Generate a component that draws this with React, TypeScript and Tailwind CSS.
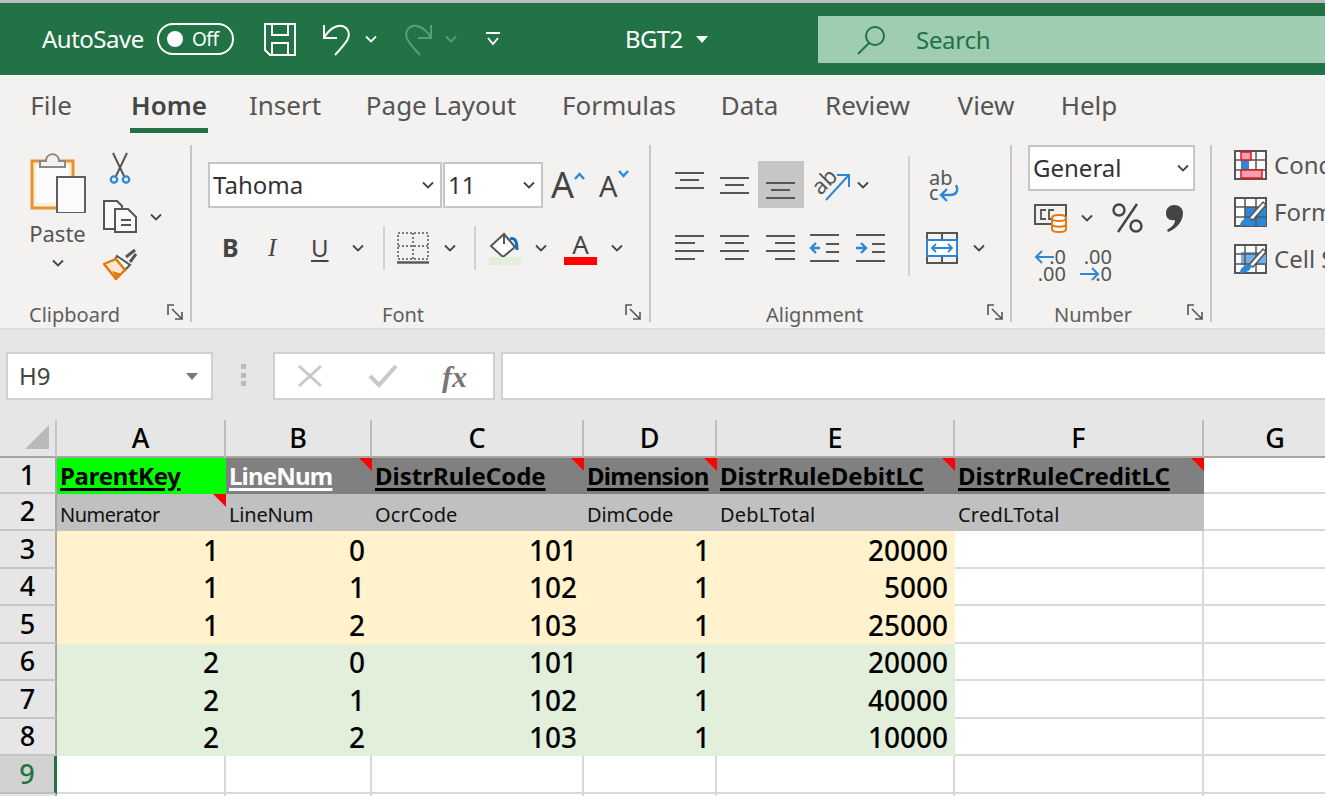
import React from "react";

const UI = "font-['Noto_Sans',sans-serif]";
const GREY = "#444444";

function Chev({ className = "", color = GREY }: { className?: string; color?: string }) {
  return (
    <svg width="12" height="8" viewBox="0 0 12 8" className={"shrink-0 " + className} fill="none">
      <path d="M1 1.5 6 6.5 11 1.5" stroke={color} strokeWidth="1.8" />
    </svg>
  );
}

function Launcher({ className = "" }: { className?: string }) {
  return (
    <svg width="17" height="17" viewBox="0 0 17 17" className={"shrink-0 " + className} fill="none" stroke="#555" strokeWidth="1.6">
      <path d="M7 1H1v10" />
      <path d="M5 5 15 15M15 8v7H8" />
    </svg>
  );
}

function Lines({ rows }: { rows: [number, number, number][] }) {
  return (
    <svg width="30" height="30" viewBox="0 0 30 30" fill="none" stroke="#555" strokeWidth="2" className="shrink-0">
      {rows.map(([a, b, y], i) => (
        <line key={i} x1={a} x2={b} y1={y} y2={y} />
      ))}
    </svg>
  );
}

function AlignBtn({ rows, active = false }: { rows: [number, number, number][]; active?: boolean }) {
  return (
    <div className={"w-[45.5px] h-[47px] flex items-center justify-center " + (active ? "bg-[#c8c6c4]" : "")}>
      <Lines rows={rows} />
    </div>
  );
}

function Save() {
  return (
    <svg width="32" height="33" viewBox="0 0 32 33" fill="none" stroke="#fff" strokeWidth="2">
      <path d="M1 1h30v31H6l-5-5z" />
      <path d="M8 1v11h16V1M8 32V20h16v12" />
    </svg>
  );
}

function Undo({ flip = false, color = "#fff" }: { flip?: boolean; color?: string }) {
  return (
    <svg width="30" height="34" viewBox="0 0 30 34" fill="none" stroke={color} strokeWidth="2" className={flip ? "-scale-x-100" : ""}>
      <path d="M2 3v13h13" />
      <path d="M2 16C8 5 19 0 25 7c5 7 0 13-12 26" />
    </svg>
  );
}

function PasteIcon() {
  return (
    <svg width="56" height="61" viewBox="0 0 56 61">
      <rect x="2" y="9" width="41" height="47" fill="#fdf0d8" stroke="#e8912d" strokeWidth="3" />
      <rect x="6" y="13" width="33" height="38" fill="#fbfbfb" />
      <path d="M10 15V9h6c0-9 13-9 13 0h6v6z" fill="#f3f2f1" stroke="#8a8886" strokeWidth="2" />
      <rect x="27" y="25" width="28" height="36" fill="#fbfbfb" stroke="#5f5f5f" strokeWidth="2" />
    </svg>
  );
}

function CutIcon() {
  return (
    <svg width="22" height="32" viewBox="0 0 22 32" fill="none">
      <path d="M4 1 15 24M18 1 7 24" stroke="#555" strokeWidth="2" />
      <circle cx="5" cy="27.5" r="3.2" stroke="#2b88d8" strokeWidth="2.2" />
      <circle cx="17" cy="27.5" r="3.2" stroke="#2b88d8" strokeWidth="2.2" />
    </svg>
  );
}

function CopyIcon() {
  return (
    <svg width="34" height="33" viewBox="0 0 34 33" fill="#f9f9f9" stroke="#555" strokeWidth="2">
      <path d="M12 29H1V1h13l5 5v4" />
      <path d="M12 9h13l8 8v15H12z" />
      <path d="M18 20h10M18 25h10" fill="none" />
    </svg>
  );
}

function BrushIcon() {
  return (
    <svg width="34" height="32" viewBox="0 0 34 32" fill="none">
      <path d="M23 9 32 2M27 14 33 6" stroke="#555" strokeWidth="3" />
      <path d="M14 8 27 17 22 22 12 12z" fill="#fff" stroke="#555" strokeWidth="2" />
      <path d="M1 16 13 11 22 22 13 31z" fill="#fbe7cf" stroke="#e07a10" strokeWidth="2.4" />
      <path d="M9 23 14 31 19 26z" fill="#e07a10" />
    </svg>
  );
}

function BordersIcon() {
  return (
    <svg width="32" height="32" viewBox="0 0 32 32" fill="none" stroke="#555">
      <path d="M1 1h30v26H1zM16 1v26M1 14h30" strokeWidth="1.5" strokeDasharray="2 2" />
      <path d="M0 30.500h32" strokeWidth="2.4" />
    </svg>
  );
}

function FillIcon() {
  return (
    <svg width="32" height="33" viewBox="0 0 32 33" fill="none">
      <path d="M2 14 15 2l11 13-12 10z" fill="#fff" stroke="#555" strokeWidth="2" />
      <path d="M15 2v10" stroke="#555" strokeWidth="2" />
      <path d="M21 7c5-2 7 2 7 11" stroke="#106ebe" strokeWidth="3" />
      <rect x="0" y="25" width="32" height="8" fill="#e2efda" />
    </svg>
  );
}

function Orientation() {
  return (
    <svg width="36" height="33" viewBox="0 0 36 33" fill="none" className="overflow-visible">
      <text x="-1" y="22" transform="rotate(-45 10 16)" fontFamily="Noto Sans, sans-serif" fontSize="22" fill="#555">ab</text>
      <path d="M12 32 34 8M23 7h12v12" stroke="#2b88d8" strokeWidth="2" />
    </svg>
  );
}

function Wrap() {
  return (
    <svg width="30" height="32" viewBox="0 0 30 32" fill="none" className="overflow-visible">
      <text x="0" y="15" fontFamily="Noto Sans, sans-serif" fontSize="20" fill="#555">ab</text>
      <text x="0" y="30" fontFamily="Noto Sans, sans-serif" fontSize="20" fill="#555">c</text>
      <path d="M27 15c3 6 0 10-6 10H13M18 19l-6 6 6 6" stroke="#2b88d8" strokeWidth="2.4" />
    </svg>
  );
}

function Merge() {
  return (
    <svg width="32" height="32" viewBox="0 0 32 32" fill="none">
      <rect x="1" y="1" width="30" height="30" stroke="#555" strokeWidth="2" />
      <path d="M16 1v8M16 23v8" stroke="#555" strokeWidth="2" />
      <rect x="1" y="8" width="30" height="16" fill="#fff" stroke="#2b88d8" strokeWidth="2" />
      <path d="M6 16h20M10 12l-4 4 4 4M22 12l4 4-4 4" stroke="#2b88d8" strokeWidth="1.800" />
    </svg>
  );
}

function Indent({ out }: { out?: boolean }) {
  return (
    <svg width="30" height="30" viewBox="0 0 30 30" fill="none">
      <path d="M1 2h29M17 11h13M17 19h13M1 28h29" stroke="#555" strokeWidth="2" />
      {out ? (
        <path d="M11 15H2M7 10l-5 5 5 5" stroke="#2b88d8" strokeWidth="2.4" />
      ) : (
        <path d="M1 15h10M6 10l5 5-5 5" stroke="#2b88d8" strokeWidth="2.4" />
      )}
    </svg>
  );
}

function Currency() {
  return (
    <svg width="34" height="30" viewBox="0 0 34 30" fill="none">
      <rect x="1" y="2" width="31" height="19" fill="#f3f2f1" stroke="#555" strokeWidth="2" />
      <path d="M12 7H7v9h5M20 7h-5v9h5" stroke="#555" strokeWidth="1.800" />
      <path d="M18 15v11c0 4 14 4 14 0V15c0-4-14-4-14 0zM18 15c0 4 14 4 14 0M18 21c0 3.500 14 3.500 14 0" fill="#fff" stroke="#e07a10" strokeWidth="2" />
    </svg>
  );
}

function Percent() {
  return (
    <svg width="31" height="30" viewBox="0 0 31 30" fill="none" stroke="#444" strokeWidth="2.4">
      <circle cx="7" cy="7" r="5.500" />
      <circle cx="24" cy="23" r="5.500" />
      <path d="M25 1 6 29" />
    </svg>
  );
}

function Comma() {
  return (
    <svg width="18" height="27" viewBox="0 0 18 27">
      <path d="M9 0c5 0 9 3 9 8 0 9-7 16-15 19l-1-2c5-3 8-6 8-10-6 1-9-2-9-7 0-5 4-8 8-8z" fill="#444" />
    </svg>
  );
}

function TableIcon({ kind }: { kind: "cond" | "table" | "cell" }) {
  return (
    <svg width="33" height="30" viewBox="0 0 33 30" fill="none" className="shrink-0">
      <rect x="1" y="1" width="31" height="28" fill="#fff" stroke="#555" strokeWidth="2" />
      {kind === "table" && <rect x="11" y="10" width="21" height="19" fill="#2b88d8" />}
      {kind === "cell" && <rect x="7" y="8" width="25" height="13" fill="#71afe5" />}
      <path d="M1 10h31M1 20h31M11 1v28M22 1v28" stroke="#555" strokeWidth="1.500" />
      {kind === "cond" && (
        <>
          <rect x="7" y="2" width="10" height="8" fill="#f4a0ac" stroke="#e81123" strokeWidth="1.500" />
          <rect x="7" y="11" width="8" height="8" fill="#2b88d8" />
          <rect x="7" y="20" width="21" height="8" fill="#f4a0ac" stroke="#e81123" strokeWidth="1.500" />
        </>
      )}
      {kind !== "cond" && (
        <>
          <path d="M15 21 29 5l3 3-13 15z" fill="#fff" stroke="#555" strokeWidth="1.500" />
          <path d="M6 29c0-6 6-9 11-8 1 5-4 8-11 8z" fill="#2b88d8" />
        </>
      )}
    </svg>
  );
}

function DecIcon({ more }: { more?: boolean }) {
  return (
    <div className="w-[32px] h-[34px] flex flex-col text-[20px] leading-[17px] text-[#555] relative items-end">
      <span>{more ? ".00" : ".0"}</span>
      <span>{more ? ".0" : ".00"}</span>
      <svg width="20" height="14" viewBox="0 0 20 14" fill="none" className={"absolute " + (more ? "left-0 top-[19px]" : "left-0 top-[2px]")}>
        {more ? (
          <path d="M0 7h18M12 1l6 6-6 6" stroke="#2b88d8" strokeWidth="2" />
        ) : (
          <path d="M20 7H2M8 1 2 7l6 6" stroke="#2b88d8" strokeWidth="2" />
        )}
      </svg>
    </div>
  );
}

function Sep() {
  return <div className="w-[2px] h-[177px] mt-[12px] bg-[#c8c6c4] shrink-0" />;
}

function Foot({ label, labelLeft, launcher }: { label: string; labelLeft: string; launcher?: string }) {
  return (
    <div className="h-[32px] pt-[6px] flex items-center relative text-[20px] text-[#605e5c]">
      <span className={labelLeft}>{label}</span>
      {launcher && <Launcher className={"absolute top-[8px] " + launcher} />}
    </div>
  );
}

function Combo({ text, w, caret = "ml-auto mr-[6px]" }: { text: string; w: string; caret?: string }) {
  return (
    <div className={"h-[46px] border-2 border-[#c8c6c4] bg-white flex items-center pl-[3px] text-[24px] text-[#333] shrink-0 " + w}>
      <span>{text}</span>
      <Chev className={caret} />
    </div>
  );
}

const COLS = [
  { label: "A", n: "ParentKey", tk: "tracking-[-0.3px]", s: "Numerator", stk: "tracking-[-0.5px]", a: ["1", "1", "1", "2", "2", "2"] },
  { label: "B", n: "LineNum", tk: "tracking-[-0.8px]", s: "LineNum", stk: "tracking-[-0.2px]", a: ["0", "1", "2", "0", "1", "2"] },
  { label: "C", n: "DistrRuleCode", tk: "tracking-[0px]", s: "OcrCode", stk: "tracking-[0.1px]", a: ["101", "102", "103", "101", "102", "103"] },
  { label: "D", n: "Dimension", tk: "tracking-[-0.7px]", s: "DimCode", stk: "tracking-[-0.1px]", a: ["1", "1", "1", "1", "1", "1"] },
  { label: "E", n: "DistrRuleDebitLC", tk: "tracking-[0px]", s: "DebLTotal", stk: "tracking-[0.2px]", a: ["20000", "5000", "25000", "20000", "40000", "10000"] },
  { label: "F", n: "DistrRuleCreditLC", tk: "tracking-[0px]", s: "CredLTotal", stk: "tracking-[0.2px]", a: [] as string[] },
];

function Flag() {
  return (
    <svg width="13" height="13" viewBox="0 0 13 13" className="absolute right-0 top-0">
      <path d="M0 0h13v13z" fill="#ff0000" />
    </svg>
  );
}

const WHITE = "bg-white border-r-2 border-b-2 border-[#d9d9d9]";

function RowHead({ n, sel }: { n: number; sel?: boolean }) {
  return (
    <div
      className={
        "flex items-center justify-center text-[27px] font-medium border-b-2 " +
        (sel
          ? "bg-[#d2d2d2] text-[#217346] border-r-[3px] border-r-[#217346] border-b-[#bdbdbd]"
          : "bg-[#e6e6e6] text-black border-r-2 border-r-[#a6a6a6] border-b-[#c4c4c4]")
      }
    >
      {n}
    </div>
  );
}

function Sheet() {
  return (
    <div className="grid grid-cols-[57px_169px_146px_212px_133px_238px_249px_144px] grid-rows-[38px_36px_37px_38px_37px_38px_37px_38px_37px_38px_10px] bg-white">
      <div className="bg-[#e6e6e6] border-r-2 border-r-[#c4c4c4] border-b-2 border-b-[#a6a6a6] flex items-end justify-end pr-[6px] pb-[7px]">
        <svg width="24" height="24" viewBox="0 0 24 24"><path d="M24 0v24H0z" fill="#b9b9b9" /></svg>
      </div>
      {[...COLS.map((c) => c.label), "G"].map((l) => (
        <div key={l} className="bg-[#e6e6e6] border-r-2 border-r-[#bdbdbd] border-b-2 border-b-[#a6a6a6] flex items-center justify-center text-[27px] font-medium text-black">
          {l}
        </div>
      ))}

      <RowHead n={1} />
      {COLS.map((c, i) => (
        <div key={c.n} className={"relative flex items-center pl-[3px] whitespace-nowrap text-[24px] font-bold underline decoration-[3px] underline-offset-[3px] " + c.tk + " " + (i === 0 ? "bg-[#00ff00] text-black" : i === 1 ? "bg-[#808080] text-white" : "bg-[#808080] text-black")}>
          {c.n}
          {i > 0 && <Flag />}
        </div>
      ))}
      <div className={WHITE} />

      <RowHead n={2} />
      {COLS.map((c, i) => (
        <div key={c.s} className={"relative bg-[#c0c0c0] flex items-end pb-[1px] pl-[3px] text-[20px] text-[#111] " + c.stk}>
          {c.s}
          {i === 0 && <Flag />}
        </div>
      ))}
      <div className={WHITE} />

      {[0, 1, 2, 3, 4, 5].map((r) => (
        <React.Fragment key={r}>
          <RowHead n={r + 3} />
          {COLS.slice(0, 5).map((c) => (
            <div key={c.label} className={"flex items-end justify-end pr-[7px] text-[28px] font-medium leading-[37px] text-black " + (r < 3 ? "bg-[#fff2cc]" : "bg-[#e2efda]")}>
              {c.a[r]}
            </div>
          ))}
          <div className={WHITE} />
          <div className={WHITE} />
        </React.Fragment>
      ))}

      <RowHead n={9} sel />
      {[0, 1, 2, 3, 4, 5, 6].map((i) => <div key={i} className={WHITE} />)}
      <div className="bg-[#e6e6e6] border-r-2 border-r-[#a6a6a6]" />
      {[0, 1, 2, 3, 4, 5, 6].map((i) => <div key={i} className="bg-white border-r-2 border-[#d9d9d9]" />)}
    </div>
  );
}

export default function App() {
  const tabs: [string, string][] = [
    ["File", "w-[40px] ml-[31px]"],
    ["Home", "w-[78px] ml-[59px]"],
    ["Insert", "w-[70px] ml-[42px]"],
    ["Page Layout", "w-[150px] ml-[46px]"],
    ["Formulas", "w-[112px] ml-[47px]"],
    ["Data", "w-[57px] ml-[46px]"],
    ["Review", "w-[85px] ml-[47px]"],
    ["View", "w-[58px] ml-[47px]"],
    ["Help", "w-[56px] ml-[46px]"],
  ];
  return (
    <div className={"w-[1325px] h-[796px] overflow-hidden bg-[#e6e6e6] " + UI}>
      <div className="h-[3px] bg-[#bdbdbd]" />
      {/* title bar */}
      <div className="h-[72px] bg-[#217346] flex items-center text-white">
        <span className="ml-[42px] text-[24px] w-[103px] whitespace-nowrap tracking-[-0.5px]">AutoSave</span>
        <div className="ml-[12px] w-[77px] h-[32px] rounded-full border-2 border-white flex items-center pl-[8px] gap-[9px] text-[19px]">
          <span className="w-[16px] h-[16px] rounded-full bg-white" />
          <span className="tracking-[-0.5px]">Off</span>
        </div>
        <div className="ml-[30px]"><Save /></div>
        <div className="ml-[26px]"><Undo /></div>
        <Chev className="ml-[13px]" color="#fff" />
        <div className="ml-[26px]"><Undo flip color="#5a9c78" /></div>
        <Chev className="ml-[12px]" color="#5a9c78" />
        <svg width="14" height="16" viewBox="0 0 14 16" className="ml-[29px]" fill="none" stroke="#fff" strokeWidth="1.800">
          <path d="M0 2h14M2 7l5 6 5-6" />
        </svg>
        <span className="ml-[125px] text-[24px] w-[58px] tracking-[-0.6px]">BGT2</span>
        <svg width="12" height="7" viewBox="0 0 12 7" className="ml-[13px]"><path d="M0 0h12L6 7z" fill="#fff" /></svg>
        <div className="ml-[110px] flex-1 h-[47px] bg-[#9fcdb2] flex items-center pl-[38px] mt-[1px]">
          <svg width="30" height="30" viewBox="0 0 30 30" fill="none" stroke="#217346" strokeWidth="2">
            <circle cx="19" cy="11" r="9" />
            <path d="M13 18 2 29" />
          </svg>
          <span className="ml-[30px] text-[24px] text-[#217346] tracking-[-0.3px]">Search</span>
        </div>
      </div>
      {/* tabs */}
      <div className="h-[58px] bg-[#f3f2f1] border-t border-white flex text-[26px] text-[#555]">
        {tabs.map(([t, cls]) => (
          <div key={t} className={"h-full flex flex-col items-center whitespace-nowrap shrink-0 " + cls}>
            <span className={"leading-[34px] mt-[12px] " + (t === "Home" ? "font-semibold text-[#444]" : "")}>{t}</span>
            {t === "Home" && <span className="w-full h-[5px] bg-[#217346] mt-auto" />}
          </div>
        ))}
      </div>
      {/* ribbon */}
      <div className="h-[197px] bg-[#f3f2f1] flex text-[#444] border-b-2 border-[#dcdcdc]">
        {/* clipboard */}
        <div className="w-[190px] flex flex-col shrink-0">
          <div className="h-[165px] flex pl-[27px] pt-[19px]">
            <div className="w-[61px] flex flex-col items-center">
              <PasteIcon />
              <span className="text-[22px] leading-[26px] mt-[7px] text-[#555]">Paste</span>
              <Chev className="mt-[13px]" />
            </div>
            <div className="ml-[15px] flex flex-col">
              <div className="ml-[6px]"><CutIcon /></div>
              <div className="flex items-center mt-[16px]"><CopyIcon /><Chev className="ml-[13px]" /></div>
              <div className="mt-[15px]"><BrushIcon /></div>
            </div>
          </div>
          <Foot label="Clipboard" labelLeft="ml-[29px]" launcher="left-[167px]" />
        </div>
        <Sep />
        {/* font */}
        <div className="w-[457px] flex flex-col shrink-0">
          <div className="h-[165px] pl-[16px] pt-[29px]">
            <div className="flex items-center">
              <Combo text="Tahoma" w="w-[234px]" />
              <Combo text="11" w="w-[100px] ml-[1px]" />
              <span className="ml-[8px] text-[36px] leading-none text-[#444]">A</span>
              <svg width="11" height="8" viewBox="0 0 11 8" className="mb-[18px]" fill="none"><path d="M1 7 5.500 2 10 7" stroke="#2b88d8" strokeWidth="2.400" /></svg>
              <span className="ml-[14px] text-[29px] leading-none text-[#444]">A</span>
              <svg width="11" height="8" viewBox="0 0 11 8" className="mb-[22px]" fill="none"><path d="M1 1 5.500 6 10 1" stroke="#2b88d8" strokeWidth="2.400" /></svg>
            </div>
            <div className="flex items-center h-[44px] mt-[18px]">
              <span className="ml-[14px] w-[18px] text-[25px] font-bold text-[#444]">B</span>
              <span className="ml-[28px] w-[16px] text-[25px] italic font-['Liberation_Serif',serif] text-[#444]">I</span>
              <span className="ml-[27px] w-[19px] text-[24px] underline underline-offset-[3px] text-[#444]">U</span>
              <Chev className="ml-[22px]" />
              <div className="ml-[19px] w-[2px] h-[44px] bg-[#d2d0ce]" />
              <div className="ml-[12px]"><BordersIcon /></div>
              <Chev className="ml-[15px]" />
              <div className="ml-[18px] w-[2px] h-[44px] bg-[#d2d0ce]" />
              <div className="ml-[13px]"><FillIcon /></div>
              <Chev className="ml-[14px]" />
              <div className="ml-[17px] w-[33px] flex flex-col items-center">
                <span className="text-[26px] leading-[26px] text-[#444]">A</span>
                <span className="w-full h-[8px] bg-[#ff0000]" />
              </div>
              <Chev className="ml-[14px]" />
            </div>
          </div>
          <Foot label="Font" labelLeft="ml-[190px]" launcher="left-[433px]" />
        </div>
        <Sep />
        {/* alignment */}
        <div className="w-[359px] flex flex-col shrink-0">
          <div className="h-[165px] flex pl-[16px] pt-[28px]">
            <div className="w-[241px]">
              <div className="flex items-center">
                <AlignBtn rows={[[0, 29, 3], [5, 24, 10], [0, 29, 18]]} />
                <AlignBtn rows={[[0, 29, 8], [5, 24, 15], [0, 29, 23]]} />
                <AlignBtn active rows={[[0, 29, 13], [5, 24, 20], [0, 29, 28]]} />
                <div className="ml-[10px]"><Orientation /></div>
                <Chev className="ml-[7px]" />
              </div>
              <div className="flex items-center mt-[16px]">
                <AlignBtn rows={[[0, 29, 3], [0, 20, 10], [0, 29, 18], [0, 20, 26]]} />
                <AlignBtn rows={[[0, 29, 3], [5, 24, 10], [0, 29, 18], [5, 24, 26]]} />
                <AlignBtn rows={[[0, 29, 3], [9, 29, 10], [0, 29, 18], [9, 29, 26]]} />
                <div className="ml-[5px]"><Indent out /></div>
                <div className="ml-[16px]"><Indent /></div>
              </div>
            </div>
            <div className="w-[2px] h-[120px] mt-[-5px] bg-[#d2d0ce]" />
            <div className="flex flex-col pl-[16px]">
              <div className="ml-[3px] mt-[9px]"><Wrap /></div>
              <div className="flex items-center mt-[30px]"><Merge /><Chev className="ml-[15px]" /></div>
            </div>
          </div>
          <Foot label="Alignment" labelLeft="ml-[115px]" launcher="left-[336px]" />
        </div>
        <Sep />
        {/* number */}
        <div className="w-[198px] flex flex-col shrink-0">
          <div className="h-[165px] pl-[16px] pt-[12px]">
            <Combo text="General" w="w-[167px]" caret="ml-auto mr-[4px]" />
            <div className="flex items-center h-[32px] mt-[11px] pl-[6px]">
              <Currency />
              <Chev className="ml-[13px]" />
              <div className="ml-[19px]"><Percent /></div>
              <div className="ml-[22px]"><Comma /></div>
            </div>
            <div className="flex mt-[14px] pl-[6px] gap-[14px]">
              <DecIcon />
              <DecIcon more />
            </div>
          </div>
          <Foot label="Number" labelLeft="ml-[42px]" launcher="left-[175px]" />
        </div>
        <Sep />
        {/* styles */}
        <div className="flex-1 pl-[22px] pt-[8px] overflow-hidden">
          {([["cond", "Conditional Formatting"], ["table", "Format as Table"], ["cell", "Cell Styles"]] as const).map(([k, t]) => (
            <div key={k} className="h-[47px] flex items-center gap-[7px] whitespace-nowrap text-[24px] text-[#555]">
              <TableIcon kind={k} />
              <span>{t}</span>
            </div>
          ))}
        </div>
      </div>
      {/* formula bar */}
      <div className="h-[90px] pt-[22px] flex items-start">
        <div className="ml-[6px] w-[207px] h-[48px] bg-white border-2 border-[#d0d0d0] flex items-center pl-[11px] text-[24px] text-[#444]">
          H9
          <svg width="12" height="7" viewBox="0 0 12 7" className="ml-auto mr-[13px]"><path d="M0 0h12L6 7z" fill="#777" /></svg>
        </div>
        <div className="ml-[28px] w-[5px] h-[22px] mt-[12px] flex flex-col justify-between">
          <span className="h-[5px] bg-[#bbb]" /><span className="h-[5px] bg-[#bbb]" /><span className="h-[5px] bg-[#bbb]" />
        </div>
        <div className="ml-[27px] w-[222px] h-[48px] bg-white border-2 border-[#d0d0d0] flex items-center pl-[22px]">
          <svg width="26" height="24" viewBox="0 0 26 24" fill="none" stroke="#c8c8c8" strokeWidth="3"><path d="M2 2 24 22M24 2 2 22" /></svg>
          <svg width="30" height="24" viewBox="0 0 30 24" className="ml-[45px]" fill="none" stroke="#c8c8c8" strokeWidth="4"><path d="M2 12l9 9L28 2" /></svg>
          <span className="ml-[44px] text-[30px] italic font-bold font-['Liberation_Serif',serif] text-[#777]">fx</span>
        </div>
        <div className="ml-[6px] flex-1 h-[48px] bg-white border-2 border-r-0 border-[#d0d0d0]" />
      </div>
      <Sheet />
    </div>
  );
}
